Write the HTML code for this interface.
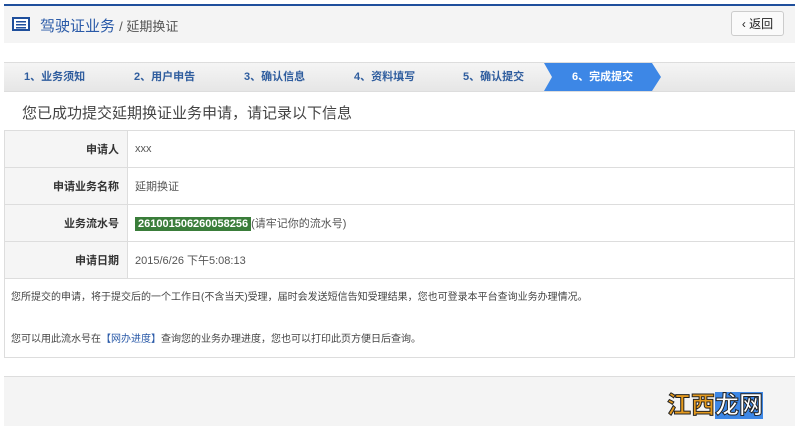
<!DOCTYPE html><html><head><meta charset="utf-8"><style>
body{margin:0;width:800px;height:430px;background:#fff;font-family:"Liberation Sans","Noto Sans CJK SC",sans-serif;position:relative;overflow:hidden}
.a{position:absolute}
.hdr{left:4px;top:4px;width:791px;height:39px;background:#f4f4f4;border-top:2px solid #1f4f9c;box-sizing:border-box}
.steps{left:4px;top:62px;width:791px;height:30px;background:linear-gradient(#f5f5f5,#e6e6e6);border-top:1px solid #ddd;border-bottom:1px solid #ddd;box-sizing:border-box}
.st{position:absolute;top:0;height:28px;line-height:28px;font-size:11px;font-weight:bold;color:#2f5d9e}
table{position:absolute;left:4px;top:130px;width:791px;border-collapse:collapse;font-size:11px}
td{border:1px solid #ddd;height:36px;padding:0}
td.l{width:114px;background:#f5f5f5;text-align:right;padding-right:8px;font-weight:bold;color:#333}
td.v{padding-left:7px;color:#555}
</style></head><body>
<div class="a hdr">
<svg class="a" style="left:8px;top:11px" width="18" height="14"><rect x="1" y="1" width="16" height="12" fill="#fff" stroke="#1f4f9c" stroke-width="2"/><rect x="4" y="4" width="10" height="1.5" fill="#1f4f9c"/><rect x="4" y="7" width="10" height="1.5" fill="#1f4f9c"/><rect x="4" y="10" width="10" height="1.5" fill="#1f4f9c"/></svg>
<div class="a" style="left:36px;top:9px;font-size:15px;color:#2a5aa8">驾驶证业务 <span style="color:#555;font-size:13px">/ 延期换证</span></div>
<div class="a" style="left:727px;top:5px;width:53px;height:25px;border:1px solid #ccc;border-radius:3px;background:#fafafa;font-size:12px;line-height:25px;text-align:center;color:#222;box-sizing:border-box">‹ 返回</div>
</div>
<div class="a steps">
<div class="st" style="left:20px">1、业务须知</div>
<div class="st" style="left:130px">2、用户申告</div>
<div class="st" style="left:240px">3、确认信息</div>
<div class="st" style="left:350px">4、资料填写</div>
<div class="st" style="left:459px">5、确认提交</div>
<svg class="a" style="left:540px;top:0" width="122" height="28"><polygon points="0,0 108,0 117,14 108,28 0,28 8,14" fill="#3d87e6"/></svg>
<div class="st" style="left:568px;color:#fff">6、完成提交</div>
</div>
<div class="a" style="left:22px;top:102px;font-size:15px;color:#444">您已成功提交延期换证业务申请，请记录以下信息</div>
<table>
<tr><td class="l">申请人</td><td class="v">xxx</td></tr>
<tr><td class="l">申请业务名称</td><td class="v">延期换证</td></tr>
<tr><td class="l">业务流水号</td><td class="v"><span style="background:#3a7d3a;color:#fff;font-weight:bold;font-size:11px;padding:1px 3px">261001506260058256</span>(请牢记你的流水号)</td></tr>
<tr><td class="l">申请日期</td><td class="v">2015/6/26 下午5:08:13</td></tr>
<tr><td colspan="2" style="height:78px;padding-left:6px;font-size:10px;color:#444;vertical-align:top;line-height:14px"><div style="margin-top:12px">您所提交的申请，将于提交后的一个工作日(不含当天)受理，届时会发送短信告知受理结果，您也可登录本平台查询业务办理情况。</div><div style="margin-top:28px">您可以用此流水号在<span style="color:#2a5aa8">【网办进度】</span>查询您的业务办理进度，您也可以打印此页方便日后查询。</div></td></tr>
</table>
<div class="a" style="left:4px;top:376px;width:791px;height:49px;background:#f4f4f4;border-top:1px solid #ddd"></div>
<div class="a" style="left:667px;top:385px;font-size:24px;font-weight:bold;color:#e59a1e;-webkit-text-stroke:1px #222">江西<span style="color:#fff;background:#3d87e6">龙网</span></div>
</body></html>
